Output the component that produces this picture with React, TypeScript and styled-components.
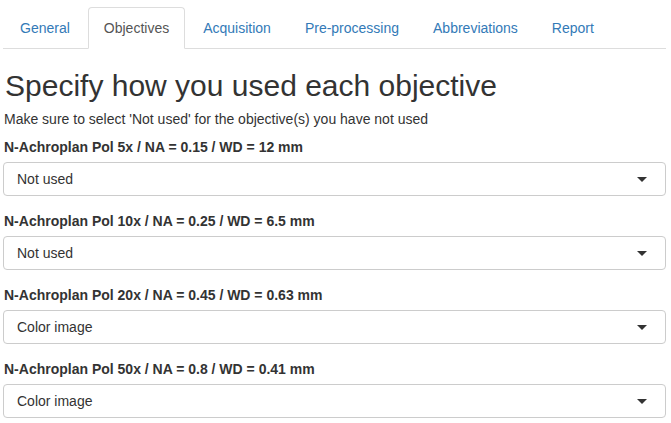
import React from "react";
import styled, { createGlobalStyle } from "styled-components";

const Global = createGlobalStyle`
  html, body { margin: 0; padding: 0; background: #fff; }
  body {
    font-family: "Liberation Sans", Arial, Helvetica, sans-serif;
    font-size: 14px;
    line-height: 20px;
    color: #333;
  }
  * { box-sizing: border-box; }
`;

const Page = styled.div`
  padding: 7px 5px 0 3px;
`;

const Tabs = styled.ul`
  display: flex;
  list-style: none;
  margin: 0;
  padding: 0 0 0 1px;
  border-bottom: 1px solid #ddd;
`;

const Tab = styled.li<{ $active?: boolean }>`
  margin-right: 2px;
  margin-bottom: -1px;
  padding: 10px 15px;
  line-height: 20px;
  border: 1px solid ${(p) => (p.$active ? "#ddd" : "transparent")};
  border-bottom-color: ${(p) => (p.$active ? "#fff" : "transparent")};
  border-radius: 4px 4px 0 0;
  background: ${(p) => (p.$active ? "#fff" : "transparent")};
  color: ${(p) => (p.$active ? "#555" : "#337ab7")};
  cursor: pointer;
`;

const Title = styled.h2`
  font-size: 30px;
  font-weight: 500;
  line-height: 1.1;
  margin: 20px 0 7px 2px;
  color: #333;
`;

const Intro = styled.p`
  margin: 0 0 8px 1px;
`;

const Group = styled.div`
  margin-bottom: 15px;
`;

const Label = styled.label`
  display: inline-block;
  font-weight: 700;
  margin: 0 0 5px 1px;
`;

const Select = styled.div`
  position: relative;
  height: 34px;
  border: 1px solid #ccc;
  border-radius: 4px;
  padding: 6px 30px 6px 13px;
  line-height: 20px;
  color: #333;
  background: #fff;
`;

const Caret = styled.span`
  position: absolute;
  right: 18px;
  top: 50%;
  margin-top: -2px;
  width: 0;
  height: 0;
  border-top: 5px solid #333;
  border-left: 5px solid transparent;
  border-right: 5px solid transparent;
`;

const tabs = ["General", "Objectives", "Acquisition", "Pre-processing", "Abbreviations", "Report"];

const objectives = [
  { label: "N-Achroplan Pol 5x / NA = 0.15 / WD = 12 mm", value: "Not used" },
  { label: "N-Achroplan Pol 10x / NA = 0.25 / WD = 6.5 mm", value: "Not used" },
  { label: "N-Achroplan Pol 20x / NA = 0.45 / WD = 0.63 mm", value: "Color image" },
  { label: "N-Achroplan Pol 50x / NA = 0.8 / WD = 0.41 mm", value: "Color image" },
];

export default function App() {
  return (
    <Page>
      <Global />
      <Tabs>
        {tabs.map((t) => (
          <Tab key={t} $active={t === "Objectives"}>
            {t}
          </Tab>
        ))}
      </Tabs>
      <Title>Specify how you used each objective</Title>
      <Intro>Make sure to select 'Not used' for the objective(s) you have not used</Intro>
      {objectives.map((o) => (
        <Group key={o.label}>
          <Label>{o.label}</Label>
          <Select>
            {o.value}
            <Caret />
          </Select>
        </Group>
      ))}
    </Page>
  );
}
